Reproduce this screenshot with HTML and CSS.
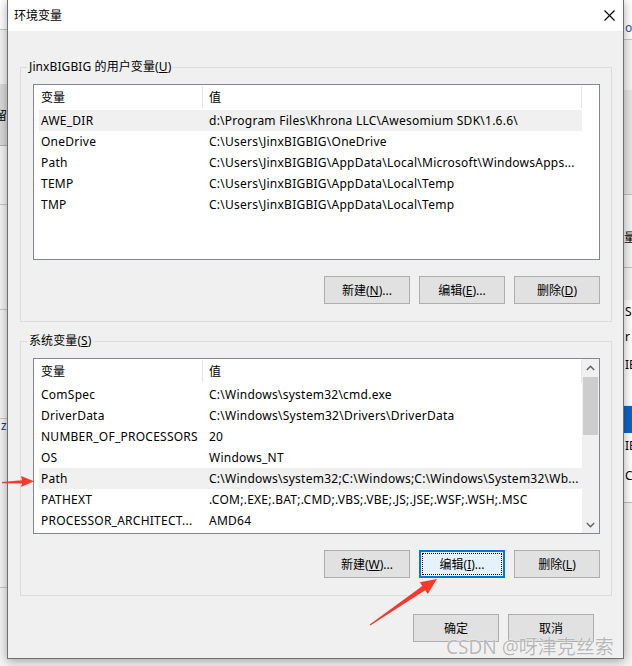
FILE: index.html
```html
<!DOCTYPE html>
<html lang="zh-CN">
<head>
<meta charset="utf-8">
<title>环境变量</title>
<link rel="stylesheet" href="styles.css">
</head>
<body>
<div class="desk">
  <div class="frag frag-l1"></div>
  <div class="frag frag-l2"><span>留</span></div>
  <div class="frag frag-l3"></div>
  <div class="frag frag-l4"></div>
  <div class="frag frag-l5"><span>z</span></div>
  <div class="frag frag-r1"><span>o</span></div>
  <div class="frag frag-r2"></div>
  <div class="frag frag-r3"><span>量</span></div>
  <div class="frag frag-r4"><span>S</span><span>r</span><span>IE</span></div>
  <div class="frag frag-r5"></div>
  <div class="frag frag-r6"><span>IE</span><span>Cl</span></div>
</div>

<div class="dialog">
  <div class="titlebar">
    <span class="title">环境变量</span>
    <svg class="close" width="11" height="11" viewBox="0 0 11 11"><path d="M0.5 0.5L10.5 10.5M10.5 0.5L0.5 10.5" stroke="#000" stroke-width="1.1" fill="none"/></svg>
  </div>
  <div class="content">
    <fieldset class="group">
      <legend>JinxBIGBIG 的用户变量(<u>U</u>)</legend>
      <div class="list">
        <div class="lv">
          <div class="lv-head"><div class="h n">变量</div><div class="h v">值</div></div>
          <div class="row sel"><div class="n">AWE_DIR</div><div class="v">d:\Program Files\Khrona LLC\Awesomium SDK\1.6.6\</div></div>
          <div class="row"><div class="n">OneDrive</div><div class="v">C:\Users\JinxBIGBIG\OneDrive</div></div>
          <div class="row"><div class="n">Path</div><div class="v">C:\Users\JinxBIGBIG\AppData\Local\Microsoft\WindowsApps...</div></div>
          <div class="row"><div class="n">TEMP</div><div class="v">C:\Users\JinxBIGBIG\AppData\Local\Temp</div></div>
          <div class="row"><div class="n">TMP</div><div class="v">C:\Users\JinxBIGBIG\AppData\Local\Temp</div></div>
        </div>
        <div class="sb-blank"></div>
      </div>
      <div class="btns">
        <button class="btn">新建(<u>N</u>)...</button>
        <button class="btn">编辑(<u>E</u>)...</button>
        <button class="btn">删除(<u>D</u>)</button>
      </div>
    </fieldset>

    <fieldset class="group group2">
      <legend>系统变量(<u>S</u>)</legend>
      <div class="list">
        <div class="lv">
          <div class="lv-head"><div class="h n">变量</div><div class="h v">值</div></div>
          <div class="row"><div class="n">ComSpec</div><div class="v">C:\Windows\system32\cmd.exe</div></div>
          <div class="row"><div class="n">DriverData</div><div class="v">C:\Windows\System32\Drivers\DriverData</div></div>
          <div class="row"><div class="n">NUMBER_OF_PROCESSORS</div><div class="v">20</div></div>
          <div class="row"><div class="n">OS</div><div class="v">Windows_NT</div></div>
          <div class="row sel"><div class="n">Path</div><div class="v">C:\Windows\system32;C:\Windows;C:\Windows\System32\Wb...</div></div>
          <div class="row"><div class="n">PATHEXT</div><div class="v">.COM;.EXE;.BAT;.CMD;.VBS;.VBE;.JS;.JSE;.WSF;.WSH;.MSC</div></div>
          <div class="row"><div class="n">PROCESSOR_ARCHITECT...</div><div class="v">AMD64</div></div>
        </div>
        <div class="sb">
          <div class="sb-btn"><svg width="9" height="6" viewBox="0 0 9 6"><path d="M0.8 5L4.5 1.3L8.2 5" stroke="#606060" stroke-width="1.4" fill="none"/></svg></div>
          <div class="sb-track"><div class="sb-thumb"></div></div>
          <div class="sb-btn"><svg width="9" height="6" viewBox="0 0 9 6"><path d="M0.8 1L4.5 4.7L8.2 1" stroke="#606060" stroke-width="1.4" fill="none"/></svg></div>
        </div>
      </div>
      <div class="btns">
        <button class="btn">新建(<u>W</u>)...</button>
        <button class="btn focus">编辑(<u>I</u>)...</button>
        <button class="btn">删除(<u>L</u>)</button>
      </div>
    </fieldset>

    <div class="footer">
      <button class="btn">确定</button>
      <button class="btn">取消</button>
    </div>
  </div>
</div>

<svg class="annot" width="632" height="666" viewBox="0 0 632 666">
  <polygon points="2,482 22,480.2 21,476 34,481.2 21,487 22,483.6 2,483.2" fill="#f5392d"/>
  <polygon points="369.7,624.6 422.4,586.0 419.8,582.3 437,579 427.8,593.9 425.2,590.2 370.3,625.4" fill="#f5392d"/>
</svg>

<div class="watermark">CSDN @呀津克丝索</div>
</body>
</html>
```

FILE: styles.css
```css
* { box-sizing: border-box; }

body {
  margin: 0;
  width: 632px;
  height: 666px;
  overflow: hidden;
  position: relative;
  background: #f4f4f4;
  font-family: "Noto Sans", "Noto Sans CJK SC", sans-serif;
  font-size: 12px;
  color: #000;
}

/* desktop fragments behind the dialog */
.desk { position: absolute; inset: 0; }
.frag { position: absolute; font-size: 12px; line-height: 14px; color: #000; overflow: hidden; }
.frag-l1 { left: 0; top: 0; width: 8px; height: 30px; background: #fff; border-bottom: 1px solid #c8c8c8; }
.frag-l2 { left: 0; top: 84px; width: 8px; height: 62px; background: #dadada; border-bottom: 1px solid #b0b0b0; }
.frag-l2 span { position: absolute; left: -5px; top: 25px; }
.frag-l3 { left: 0; top: 204px; width: 8px; height: 1px; background: #c8c8c8; }
.frag-l4 { left: 0; top: 309px; width: 8px; height: 1px; background: #c8c8c8; }
.frag-l5 { left: 0; top: 418px; width: 8px; height: 170px; border-top: 1px solid #c8c8c8; border-bottom: 1px solid #c8c8c8; }
.frag-l5 span { position: absolute; left: 1px; top: 0; color: #1a3a7a; }
.frag-r1 { left: 624px; top: 0; width: 8px; height: 40px; background: #fff; border-bottom: 1px solid #c8c8c8; }
.frag-r1 span { position: absolute; left: 1px; top: 21px; color: #1e5aa0; }
.frag-r2 { left: 624px; top: 90px; width: 8px; height: 105px; background: #e6e6e6; border-bottom: 1px solid #c0c0c0; }
.frag-r3 { left: 624px; top: 228px; width: 8px; height: 40px; border-bottom: 1px solid #c0c0c0; }
.frag-r3 span { position: absolute; left: 0; top: 3px; }
.frag-r4 { left: 624px; top: 300px; width: 8px; height: 105px; background: #fff; }
.frag-r4 span { position: absolute; left: 1px; }
.frag-r4 span:nth-child(1) { top: 5px; }
.frag-r4 span:nth-child(2) { top: 30px; }
.frag-r4 span:nth-child(3) { top: 58px; }
.frag-r5 { left: 624px; top: 406px; width: 8px; height: 27px; background: #0a64c8; }
.frag-r6 { left: 624px; top: 433px; width: 8px; height: 70px; background: #fff; border-bottom: 1px solid #c0c0c0; }
.frag-r6 span { position: absolute; left: 1px; }
.frag-r6 span:nth-child(1) { top: 6px; }
.frag-r6 span:nth-child(2) { top: 36px; }

/* dialog window */
.dialog {
  position: absolute;
  left: 7px;
  top: 0;
  width: 617px;
  height: 659px;
  border: 1px solid #6f6f6f;
  border-top: 0;
  background: #f0f0f0;
  box-shadow: 0 2px 10px rgba(0, 0, 0, 0.35);
  display: flex;
  flex-direction: column;
}

.titlebar {
  height: 31px;
  flex: none;
  background: #fff;
  display: flex;
  align-items: center;
  justify-content: space-between;
  padding: 0 8px 0 6px;
}
.title { font-size: 12px; line-height: 16px; }
.close { display: block; }

.content { padding: 0 11px 0 12px; }

.group {
  margin: 28px 0 0;
  padding: 9px 11px 17px 12px;
  border: 1px solid #dcdcdc;
  min-width: 0;
}
.group2 { margin-top: 11px; }
.group legend {
  padding: 0 2px;
  margin-left: -6px;
  line-height: 16px;
  height: 16px;
  letter-spacing: 0.1px;
}
u { text-decoration: underline; text-underline-offset: 1px; }

.list {
  height: 176px;
  border: 1px solid #828790;
  background: #fff;
  display: flex;
}
.lv { width: 548px; padding-left: 5px; flex: none; }
.sb-blank { width: 17px; flex: none; }

.lv-head, .row {
  display: grid;
  grid-template-columns: 164px 379px;
}
.lv-head { height: 25px; }
.lv-head .h {
  display: flex;
  align-items: center;
  border-right: 1px solid #e5e5e5;
  margin: 1px 0 2px;
}
.row { height: 21px; align-items: center; letter-spacing: 0.25px; }
.row.sel { background: #f0f0f0; }
.n { padding-left: 2px; white-space: nowrap; overflow: hidden; }
.v { padding-left: 6px; white-space: nowrap; overflow: hidden; }

.sb {
  width: 17px;
  flex: none;
  background: #f0f0f0;
  display: flex;
  flex-direction: column;
}
.sb-btn { height: 17px; display: flex; align-items: center; justify-content: center; }
.sb-track { flex: 1; padding: 1px 1px 0; }
.sb-thumb { height: 58px; background: #cdcdcd; }

.btns {
  display: flex;
  justify-content: flex-end;
  gap: 9px;
  margin-top: 16px;
}
.btn {
  width: 86px;
  height: 28px;
  padding: 0;
  border: 1px solid #adadad;
  background: #e1e1e1;
  font: inherit;
  color: #000;
}
.btn.focus {
  border-color: #0078d7;
  box-shadow: inset 0 0 0 1px #0078d7;
  background: #e5f1fb;
  outline: 1px dotted #000;
  outline-offset: -4px;
}

.footer {
  display: flex;
  justify-content: flex-end;
  gap: 9px;
  margin-top: 18px;
  padding-right: 18px;
}

/* annotations on top */
.annot { position: absolute; left: 0; top: 0; pointer-events: none; }

.watermark {
  position: absolute;
  left: 446px;
  top: 638px;
  font-family: "Noto Sans", "Noto Sans CJK SC", sans-serif;
  font-size: 19px;
  line-height: 19px;
  color: rgba(110, 110, 110, 0.5);
  text-shadow: 0 0 1px #fff, 0 0 1px #fff;
  white-space: nowrap;
}
```
